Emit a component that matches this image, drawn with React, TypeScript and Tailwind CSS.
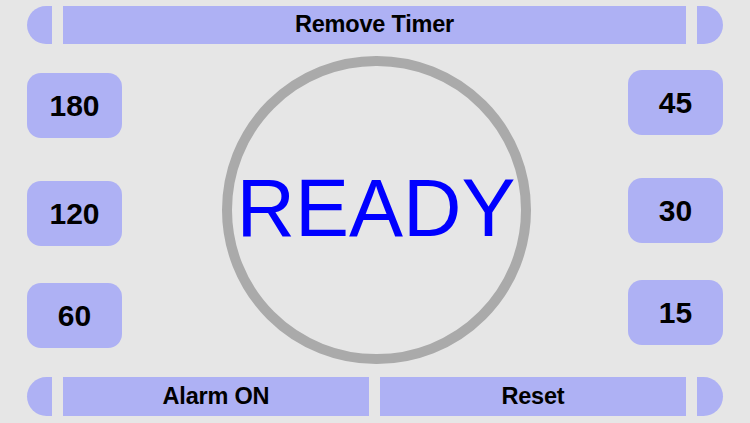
export default function App() {
  const font = { fontFamily: '"Liberation Sans", Arial, Helvetica, sans-serif' };

  const Cap = ({ side }: { side: 'l' | 'r' }) => (
    <div
      className={
        side === 'l'
          ? 'w-[25px] h-full bg-[#aeb1f4] rounded-l-full'
          : 'w-[26px] h-full bg-[#aeb1f4] rounded-r-full'
      }
    />
  );

  const TimeButton = ({ label, className }: { label: string; className: string }) => (
    <button
      className={
        'w-[95px] h-[65px] rounded-[14px] bg-[#aeb1f4] text-black font-bold text-[30px] flex items-center justify-center ' +
        className
      }
    >
      {label}
    </button>
  );

  return (
    <div className="w-[750px] h-[423px] bg-[#e6e6e6] flex flex-col overflow-hidden" style={font}>
      {/* top bar */}
      <div className="mt-[6px] h-[38px] px-[27px] flex gap-[11px]">
        <Cap side="l" />
        <button className="flex-1 bg-[#aeb1f4] text-black font-bold text-[23.5px] tracking-[-0.2px] flex items-center justify-center">
          Remove Timer
        </button>
        <Cap side="r" />
      </div>

      {/* middle */}
      <div className="flex-1 flex px-[27px]">
        <div className="flex flex-col">
          <TimeButton label="180" className="mt-[29px]" />
          <TimeButton label="120" className="mt-[43px]" />
          <TimeButton label="60" className="mt-[37px]" />
        </div>

        <div className="flex-1 flex justify-center">
          <div className="mt-[12px] ml-[2px] w-[309px] h-[308px] rounded-full border-[10px] border-[#aaaaaa] flex items-center justify-center">
            <span className="text-[#0000ff] text-[81px] leading-none -mt-[4px]">READY</span>
          </div>
        </div>

        <div className="flex flex-col">
          <TimeButton label="45" className="mt-[26px]" />
          <TimeButton label="30" className="mt-[43px]" />
          <TimeButton label="15" className="mt-[37px]" />
        </div>
      </div>

      {/* bottom bar */}
      <div className="mb-[7px] h-[39px] px-[27px] flex gap-[11px]">
        <Cap side="l" />
        <div className="flex-1 flex gap-[11px]">
          <button className="flex-1 bg-[#aeb1f4] text-black font-bold text-[23.5px] tracking-[-0.2px] flex items-center justify-center">
            Alarm ON
          </button>
          <button className="flex-1 bg-[#aeb1f4] text-black font-bold text-[23.5px] tracking-[-0.2px] flex items-center justify-center">
            Reset
          </button>
        </div>
        <Cap side="r" />
      </div>
    </div>
  );
}
